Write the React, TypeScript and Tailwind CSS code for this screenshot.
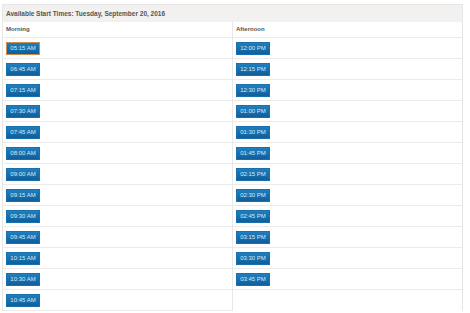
const morning = [
  "05:15 AM", "06:45 AM", "07:15 AM", "07:30 AM", "07:45 AM", "08:00 AM", "09:00 AM",
  "09:15 AM", "09:30 AM", "09:45 AM", "10:15 AM", "10:30 AM", "10:45 AM",
];
const afternoon = [
  "12:00 PM", "12:15 PM", "12:30 PM", "01:00 PM", "01:30 PM", "01:45 PM",
  "02:15 PM", "02:30 PM", "02:45 PM", "03:15 PM", "03:30 PM", "03:45 PM",
];

function TimeButton({ label, focused }: { label: string; focused?: boolean }) {
  return (
    <button
      className={`h-[13px] w-[34px] bg-gradient-to-b from-[#1f7fbd] to-[#0f5f9c] text-[6px] leading-[11px] text-[#dbe9f5] border ${
        focused ? "border-[#c98b4e]" : "border-[#1a70ad]"
      }`}
    >
      {label}
    </button>
  );
}

function Column({ title, times, last }: { title: string; times: string[]; last?: boolean }) {
  return (
    <div className={`flex flex-1 flex-col ${last ? "" : "border-r border-[#e8e8e8]"}`}>
      <div className="flex h-4 items-center border-b border-[#ebebeb] px-[3px] text-[6px] font-bold text-[#555]">
        {title}
      </div>
      {times.map((t, i) => (
        <div key={t} className="flex h-[21px] items-center border-b border-[#ebebeb] px-[3px]">
          <TimeButton label={t} focused={!last && i === 0} />
        </div>
      ))}
    </div>
  );
}

export default function App() {
  return (
    <div className="h-[313px] w-[470px] bg-white pl-[2px] pt-1 font-['Liberation_Sans',Arial,sans-serif]">
      <div className="w-[461px] border-x border-t border-[#e6e6e6]">
        <div className="flex h-[17px] items-center bg-[#f2f1ef] px-[3px] text-[6.5px] font-bold text-[#555]">
          Available Start Times: Tuesday, September 20, 2016
        </div>
        <div className="flex items-stretch">
          <Column title="Morning" times={morning} />
          <Column title="Afternoon" times={afternoon} last />
        </div>
      </div>
    </div>
  );
}
